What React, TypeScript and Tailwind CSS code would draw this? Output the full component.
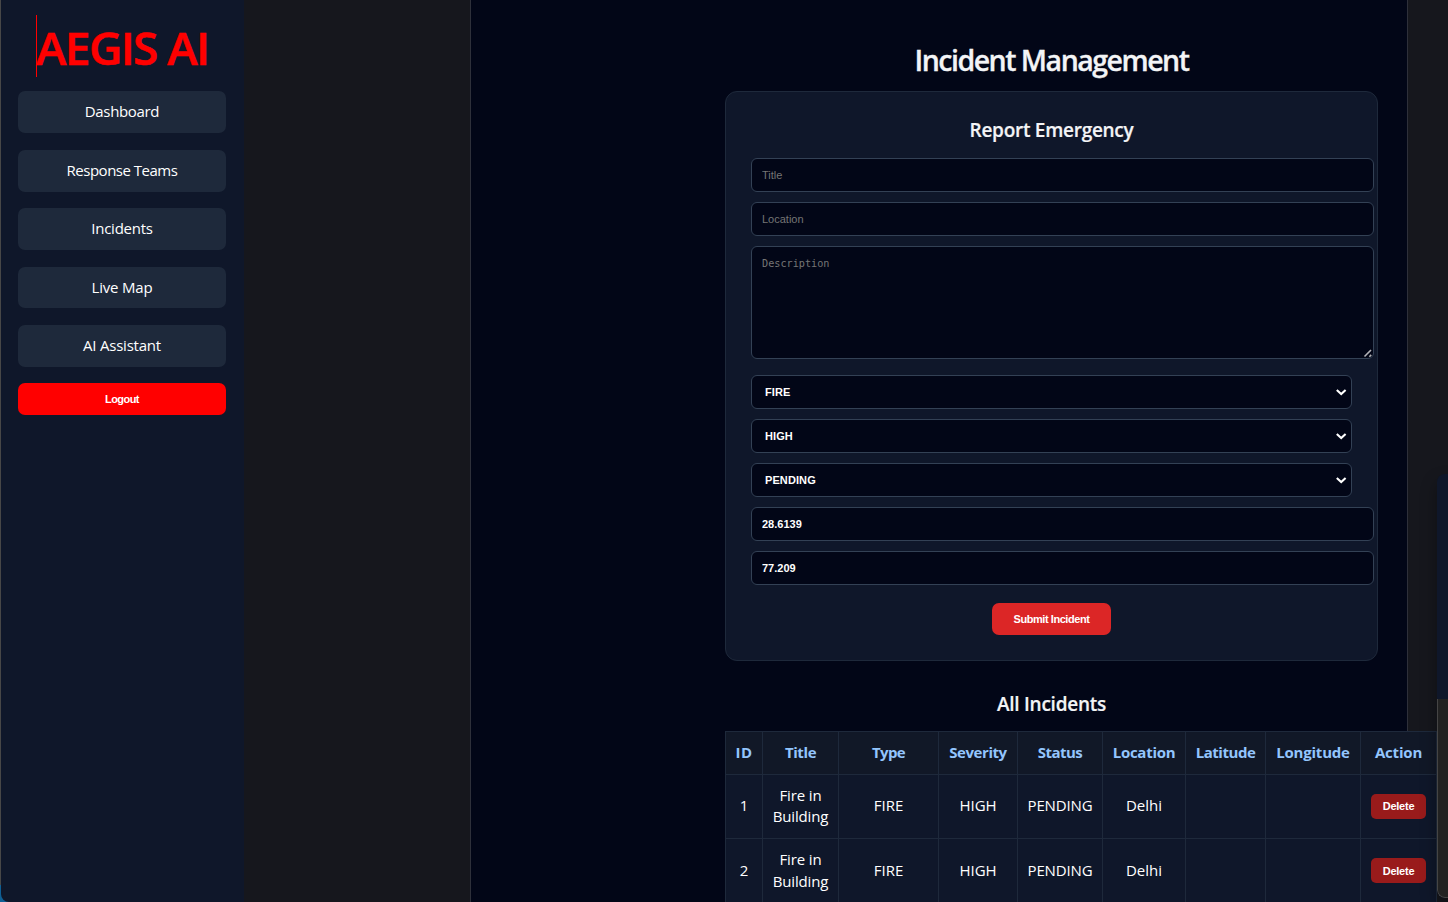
import type { ReactNode } from "react";

const navItems = [
  { label: "Dashboard", tracking: "tracking-[-0.33px]" },
  { label: "Response Teams", tracking: "tracking-[-0.5px]" },
  { label: "Incidents", tracking: "tracking-[-0.25px]" },
  { label: "Live Map", tracking: "tracking-[-0.18px]" },
  { label: "AI Assistant", tracking: "tracking-[-0.22px]" },
];

const columns = [
  { label: "ID", width: "w-[37px]", tracking: "tracking-[0.4px]" },
  { label: "Title", width: "w-[76px]", tracking: "tracking-[-0.4px]" },
  { label: "Type", width: "w-[100px]", tracking: "tracking-[-0.6px]" },
  { label: "Severity", width: "w-[79px]", tracking: "tracking-[-0.45px]" },
  { label: "Status", width: "w-[85px]", tracking: "tracking-[-0.5px]" },
  { label: "Location", width: "w-[83px]", tracking: "tracking-[-0.27px]" },
  { label: "Latitude", width: "w-[80px]", tracking: "tracking-[-0.45px]" },
  { label: "Longitude", width: "w-[95px]", tracking: "tracking-[-0.2px]" },
  { label: "Action", width: "w-[77px]", tracking: "tracking-[-0.18px]" },
];

const incidents = [
  { id: 1, title: "Fire in Building", type: "FIRE", severity: "HIGH", status: "PENDING", location: "Delhi" },
  { id: 2, title: "Fire in Building", type: "FIRE", severity: "HIGH", status: "PENDING", location: "Delhi" },
];

const field =
  "block w-[623px] h-[34px] shrink-0 rounded-[6px] border border-[#334155] bg-[#020617] px-[10px] font-['Liberation_Sans',sans-serif] text-[11px] outline-none placeholder:text-[#757575] placeholder:opacity-100";

function Sidebar() {
  return (
    <aside className="flex w-[243px] shrink-0 flex-col bg-[#0f172a] pl-[17px] pr-[18px] pt-[15px] rounded-bl-[8px]">
      <div className="ml-[18px] flex h-[62px] w-[176px] items-center whitespace-nowrap border-l border-[#f00] text-[46px] font-semibold leading-[62px] tracking-[-1.6px] text-[#f00] [-webkit-text-stroke:0.6px_#f00]">
        <span className="-ml-px pt-px">AEGIS AI</span>
      </div>
      <nav className="mt-[14.3px] flex flex-col gap-[16.6px]">
        {navItems.map((n) => (
          <a
            key={n.label}
            className={`flex h-[41.85px] items-center justify-center rounded-[7px] bg-[#1e293b] pb-[1.3px] text-[15px] text-white ${n.tracking}`}
          >
            {n.label}
          </a>
        ))}
        <button className="h-[32px] rounded-[7px] bg-[#f00] font-['Liberation_Sans',sans-serif] text-[11px] font-bold tracking-[-0.55px] text-white">
          Logout
        </button>
      </nav>
    </aside>
  );
}

function Select({ value }: { value: string }) {
  return (
    <div className="flex h-[34px] w-[601px] shrink-0 items-center justify-between rounded-[6px] border border-[#334155] bg-[#020617] pl-[13px] pr-[4px] font-['Liberation_Sans',sans-serif] text-[11px] font-bold text-white">
      <span className="tracking-[0.1px]">{value}</span>
      <svg width="12" height="8" viewBox="0 0 12 8" fill="none" stroke="white" strokeWidth="2.1">
        <path d="M1.8 2 L6.2 6 L10.6 2" />
      </svg>
    </div>
  );
}

function ReportForm() {
  return (
    <form className="flex h-[570px] w-[653px] flex-col rounded-[12px] border border-[#1e293b] bg-[#0f172a] pl-[25px]">
      <h2 className="mt-[24px] h-[28px] w-[601px] text-center text-[19px] font-semibold leading-[28px] tracking-[-0.27px] text-[#f3f4f6] [-webkit-text-stroke:0.2px_#f3f4f6]">
        Report Emergency
      </h2>
      <div className="mt-[14px] flex flex-col gap-[10px]">
        <input className={field} placeholder="Title" />
        <input className={field} placeholder="Location" />
        <div className="relative h-[119px]">
          <textarea
            className="block h-[113px] w-[623px] resize-none rounded-[6px] border border-[#334155] bg-[#020617] px-[10px] py-[10px] font-['DejaVu_Sans_Mono',monospace] text-[10.2px] leading-[13px] outline-none placeholder:text-[#757575] placeholder:opacity-100"
            placeholder="Description"
          />
          <svg className="absolute left-[612px] top-[102px]" width="10" height="10" viewBox="0 0 10 10" stroke="#b4b4b8" strokeWidth="1.6">
            <path d="M1.5 8.5 L8 2 M6.4 8.7 L8.2 6.9" />
          </svg>
        </div>
        <Select value="FIRE" />
        <Select value="HIGH" />
        <Select value="PENDING" />
        <input className={`${field} font-bold text-white`} defaultValue="28.6139" />
        <input className={`${field} font-bold text-white`} defaultValue="77.209" />
      </div>
      <div className="mt-[18px] flex w-[601px] justify-center">
        <button
          type="button"
          className="h-[32px] w-[119px] rounded-[7px] bg-[#dc2626] font-['Liberation_Sans',sans-serif] text-[11px] font-bold tracking-[-0.44px] text-white"
        >
          Submit Incident
        </button>
      </div>
    </form>
  );
}

function Cell({ children }: { children?: ReactNode }) {
  return (
    <td className="h-[64px] border-l border-t border-[#1e293b] p-0 pb-[2px] text-center align-middle last:border-r last:pb-0">
      {children}
    </td>
  );
}

function IncidentTable() {
  return (
    <table className="w-[712px] table-fixed border-separate border-spacing-0 bg-[#0f172a] text-[15px] text-white">
      <thead>
        <tr className="bg-[#111827]">
          {columns.map((c) => (
            <th
              key={c.label}
              className={`h-[43px] border-l border-t border-[#1e293b] p-0 pb-[2px] text-center align-middle font-bold leading-[21px] text-[#93c5fd] last:border-r ${c.width} ${c.tracking}`}
            >
              {c.label}
            </th>
          ))}
        </tr>
      </thead>
      <tbody>
        {incidents.map((r) => (
          <tr key={r.id} className="group leading-[22px] first:leading-[21px]">
            <Cell>{r.id}</Cell>
            <Cell>
              <div className="px-[9px] tracking-[-0.15px]">{r.title}</div>
            </Cell>
            <Cell>{r.type}</Cell>
            <Cell>{r.severity}</Cell>
            <Cell>
              <span className="tracking-[-0.15px]">{r.status}</span>
            </Cell>
            <Cell>{r.location}</Cell>
            <Cell />
            <Cell />
            <Cell>
              <button className="mx-auto block h-[25px] w-[55px] rounded-[5px] bg-[#991b1b] font-['Liberation_Sans',sans-serif] text-[11px] font-bold leading-[25px] tracking-[-0.25px] text-white group-last:pt-[2px] group-last:leading-[23px]">
                Delete
              </button>
            </Cell>
          </tr>
        ))}
      </tbody>
    </table>
  );
}

export default function App() {
  return (
    <div className="relative flex h-[902px] w-[1448px] overflow-hidden bg-[#16171d] font-['Open_Sans','Noto_Sans',sans-serif]">
      <div className="flex w-px shrink-0 flex-col">
        <div className="h-[885px] bg-[#474747]" />
        <div className="flex-1 bg-[#0f5f94]" />
      </div>
      <div className="flex w-[243px] shrink-0 bg-gradient-to-r from-[#0f5f94] from-[4%] to-[#16171d] to-[4%]">
        <Sidebar />
      </div>
      <div className="w-[226px] shrink-0" />
      <main className="flex w-[938px] shrink-0 flex-col border-x border-[#2e303a] bg-[#020617] pl-[254px]">
        <h1 className="mt-[40px] h-[40px] w-[653px] whitespace-nowrap text-center text-[28.5px] font-semibold leading-[40px] tracking-[-1.5px] text-[#f3f4f6] [-webkit-text-stroke:0.3px_#f3f4f6]">
          Incident Management
        </h1>
        <div className="mt-[11px]">
          <ReportForm />
        </div>
        <h2 className="mt-[29px] h-[28px] w-[653px] text-center text-[19px] font-semibold leading-[28px] tracking-[-0.26px] text-[#f3f4f6] [-webkit-text-stroke:0.2px_#f3f4f6]">
          All Incidents
        </h2>
        <div className="mt-[13px]">
          <IncidentTable />
        </div>
      </main>
      <div className="absolute left-[1437px] top-[474px] h-[424px] w-[40px] overflow-hidden rounded-[8px] bg-[#0f172a] shadow-[0_8px_16px_rgba(0,0,0,0.35)]">
        <div className="mt-[225px] h-[199px] rounded-bl-[8px] border-b border-l border-[#454545] bg-[#222222]" />
      </div>
    </div>
  );
}
